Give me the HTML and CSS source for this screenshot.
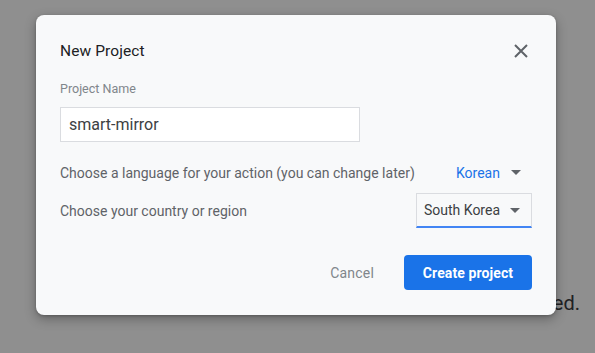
FILE: index.html
```html
<!DOCTYPE html>
<html lang="en">
<head>
    <meta charset="UTF-8">
    <title>New Project</title>
    <link rel="stylesheet" href="styles.css">
</head>
<body>
    <div class="page">
        <p class="page-text">Your project has been created.</p>
    </div>

    <div class="dialog">
        <div class="dialog-header">
            <h2>New Project</h2>
            <button class="close-btn" aria-label="Close">
                <svg width="14" height="14" viewBox="0 0 14 14">
                    <path d="M1 1 L13 13 M13 1 L1 13" stroke="#5f6368" stroke-width="2" fill="none"/>
                </svg>
            </button>
        </div>

        <label class="field-label">Project Name</label>
        <div class="text-input">smart-mirror</div>

        <div class="option-row">
            <span class="option-label">Choose a language for your action (you can change later)</span>
            <div class="plain-select">
                <span>Korean</span>
                <span class="caret"></span>
            </div>
        </div>

        <div class="option-row">
            <span class="option-label">Choose your country or region</span>
            <div class="boxed-select">
                <span>South Korea</span>
                <span class="caret"></span>
            </div>
        </div>

        <div class="actions">
            <button class="btn-text">Cancel</button>
            <button class="btn-primary">Create project</button>
        </div>
    </div>
</body>
</html>
```

FILE: styles.css
```css
body {
    margin: 0;
    font-family: Roboto, 'Liberation Sans', sans-serif;
    background: #8f8f8f;
}
.page {
    height: 353px;
    overflow: hidden;
    display: flex;
    align-items: flex-end;
    justify-content: flex-end;
}
.page-text {
    margin: 0 15px 38px 0;
    font-size: 20px;
    color: #202124;
    white-space: nowrap;
}
.dialog {
    position: absolute;
    top: 15px;
    left: 36px;
    width: 520px;
    height: 300px;
    box-sizing: border-box;
    padding: 24px 24px 0 24px;
    background: #f8f9fa;
    border-radius: 8px;
    box-shadow: 0 4px 12px rgba(0,0,0,0.3), 0 1px 3px rgba(0,0,0,0.2);
}
.dialog-header {
    display: flex;
    align-items: center;
    justify-content: space-between;
    height: 24px;
}
.dialog-header h2 {
    margin: 0;
    font-size: 15.5px;
    font-weight: 400;
    color: #202124;
    letter-spacing: 0.1px;
}
.close-btn {
    border: none;
    background: none;
    padding: 0;
    margin-right: 4px;
    width: 14px;
    height: 14px;
    display: flex;
}
.field-label {
    display: block;
    margin-top: 18px;
    font-size: 12.5px;
    color: #80868b;
    line-height: 15px;
}
.text-input {
    margin-top: 11px;
    width: 300px;
    height: 35px;
    box-sizing: border-box;
    padding: 0 8px;
    border: 1px solid #dadce0;
    background: white;
    font-size: 16px;
    color: #3c4043;
    line-height: 33px;
}
.option-row {
    display: flex;
    align-items: center;
    justify-content: space-between;
    height: 35px;
    margin-top: 13px;
}
.option-row + .option-row {
    margin-top: 3px;
}
.option-label {
    font-size: 14px;
    color: #5f6368;
}
.plain-select {
    display: flex;
    align-items: center;
    width: 76px;
    font-size: 14px;
    color: #1a73e8;
}
.boxed-select {
    display: flex;
    align-items: center;
    width: 116px;
    height: 35px;
    box-sizing: border-box;
    padding: 0 0 0 7px;
    border: 1px solid #dadce0;
    border-bottom: 2px solid #4285f4;
    font-size: 14px;
    color: #3c4043;
}
.caret {
    margin-left: auto;
    margin-right: 11px;
    width: 0;
    height: 0;
    border-left: 5px solid transparent;
    border-right: 5px solid transparent;
    border-top: 5px solid #5f6368;
}
.actions {
    display: flex;
    justify-content: flex-end;
    align-items: center;
    gap: 30px;
    margin-top: 27px;
}
.btn-text {
    border: none;
    background: none;
    padding: 0;
    font-family: Roboto, sans-serif;
    font-size: 14px;
    color: #80868b;
    letter-spacing: 0.2px;
}
.btn-primary {
    width: 128px;
    height: 35px;
    border: none;
    border-radius: 4px;
    background: #1a73e8;
    color: white;
    font-family: Roboto, sans-serif;
    font-size: 14px;
    font-weight: 700;
    letter-spacing: 0.1px;
}
```
